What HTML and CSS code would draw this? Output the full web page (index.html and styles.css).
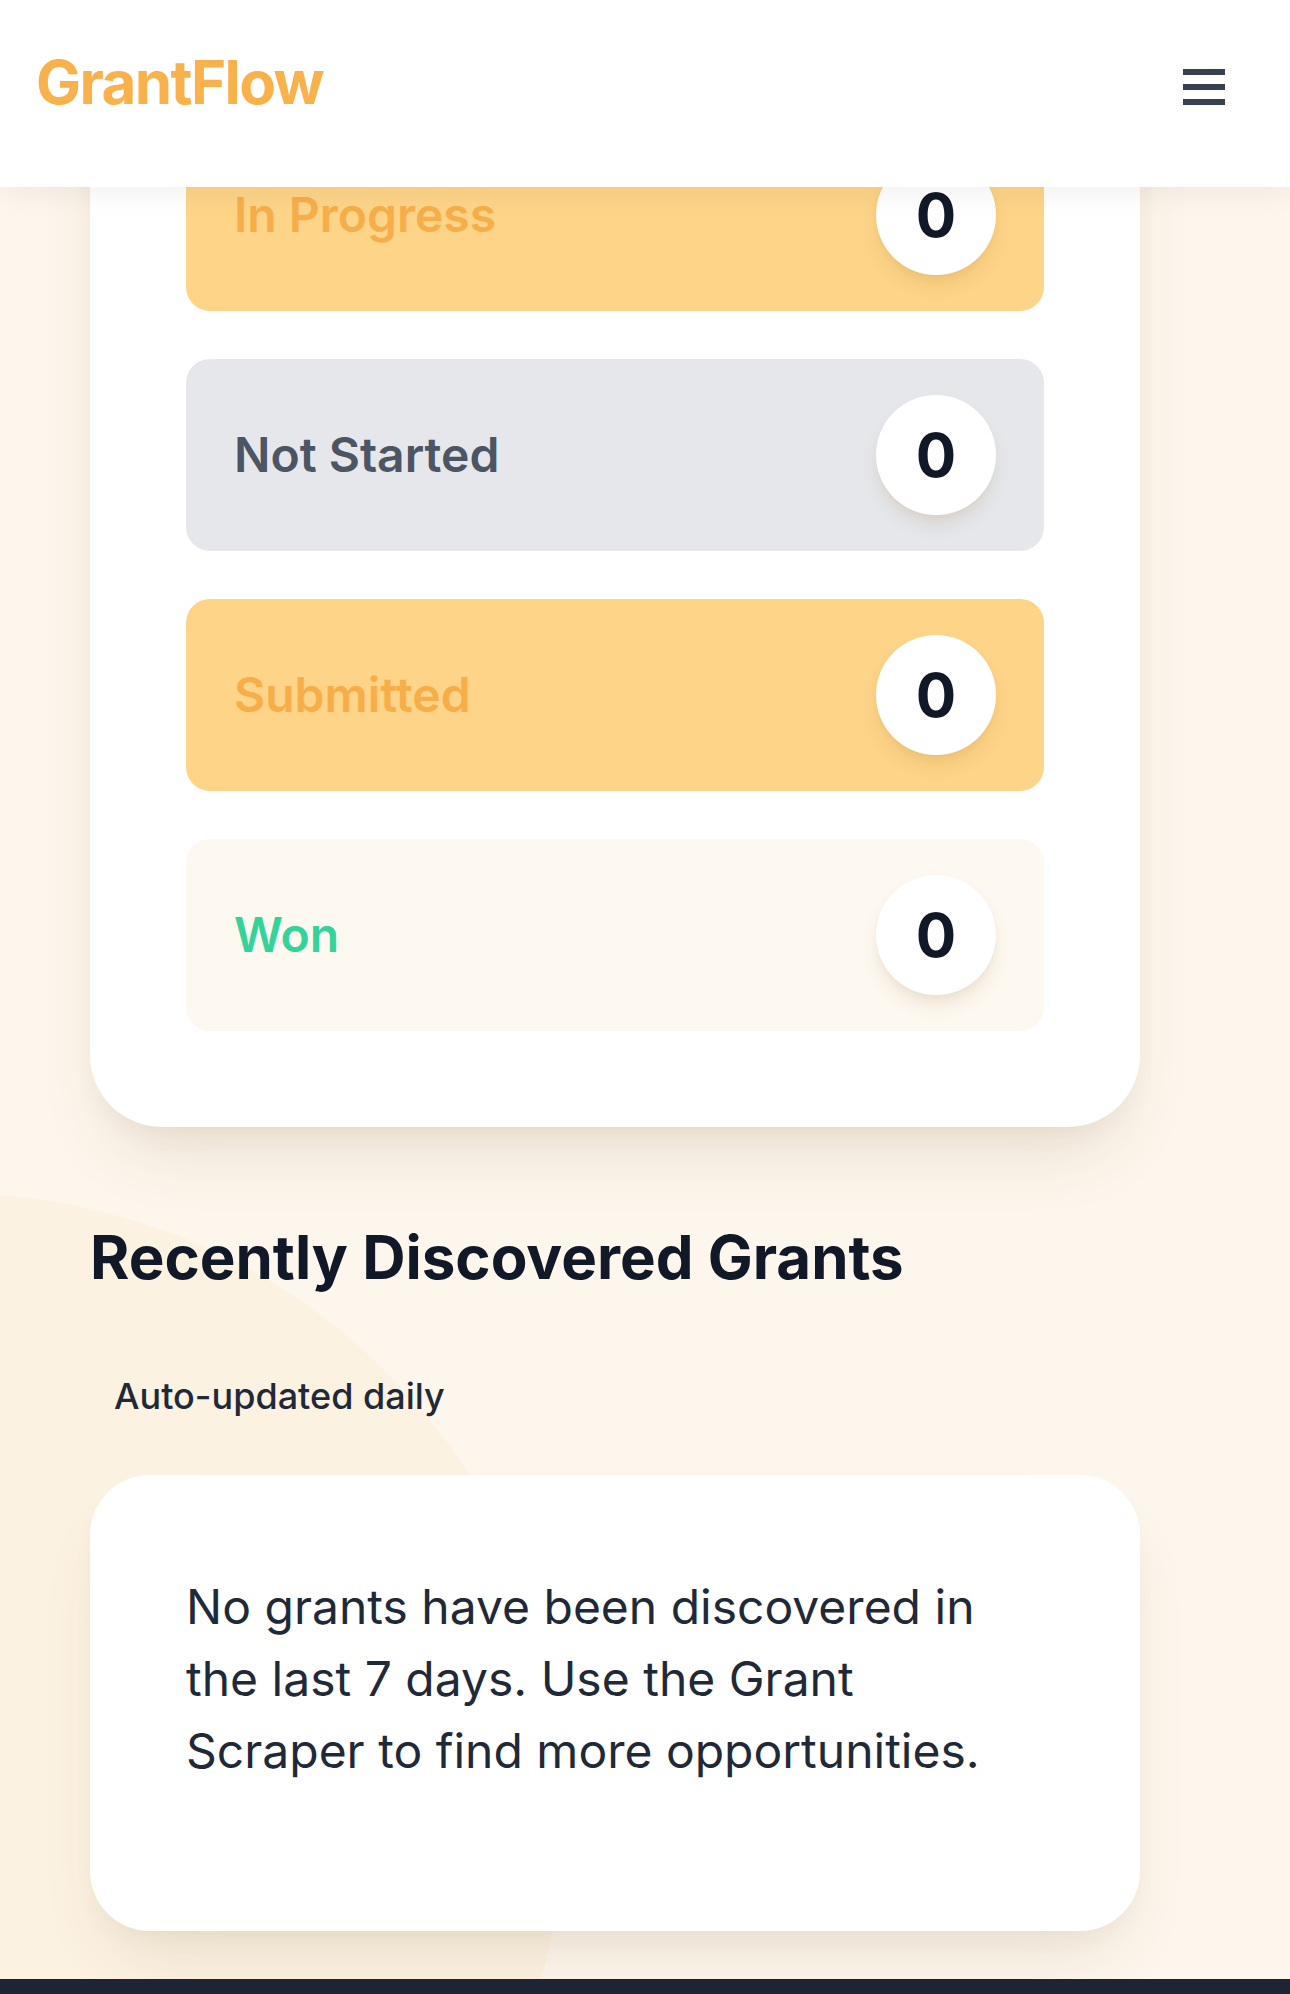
FILE: index.html
```html
<!DOCTYPE html>
<html lang="en">
<head>
<meta charset="utf-8">
<title>GrantFlow</title>
<link rel="stylesheet" href="styles.css">
</head>
<body>
<header class="topbar">
  <div class="logo">GrantFlow</div>
  <button class="menu-btn" aria-label="Menu">
    <svg width="42" height="36" viewBox="0 0 42 36" aria-hidden="true">
      <rect x="0" y="0" width="42" height="6" fill="#374151"/>
      <rect x="0" y="15" width="42" height="6" fill="#374151"/>
      <rect x="0" y="30" width="42" height="6" fill="#374151"/>
    </svg>
  </button>
</header>

<main class="page">
  <section class="status-card">
    <div class="status-list">
      <div class="status-row row-progress">
        <span class="status-label">In Progress</span>
        <span class="count">0</span>
      </div>
      <div class="status-row row-notstarted">
        <span class="status-label">Not Started</span>
        <span class="count">0</span>
      </div>
      <div class="status-row row-submitted">
        <span class="status-label">Submitted</span>
        <span class="count">0</span>
      </div>
      <div class="status-row row-won">
        <span class="status-label">Won</span>
        <span class="count">0</span>
      </div>
    </div>
  </section>

  <section class="recent">
    <h2 class="recent-title">Recently Discovered Grants</h2>
    <span class="badge">Auto-updated daily</span>
    <div class="empty-card">
      <p class="empty-text">No grants have been discovered in the last 7 days. Use the Grant Scraper to find more opportunities.</p>
    </div>
  </section>
</main>

<footer class="footer"></footer>
</body>
</html>
```

FILE: styles.css
```css
* {
  box-sizing: border-box;
}

html,
body {
  margin: 0;
  padding: 0;
}

body {
  font-family: Inter, "Noto Sans", "Liberation Sans", sans-serif;
  color: #111827;
  background:
    radial-gradient(circle 612px at -45px 1805px, #fcf2e2 calc(100% - 1.5px), rgba(252, 242, 226, 0) 100%),
    #fdf6ec;
  overflow: hidden;
}

.topbar {
  position: fixed;
  top: 0;
  left: 0;
  right: 0;
  height: 187px;
  z-index: 10;
  display: flex;
  justify-content: space-between;
  align-items: flex-start;
  padding: 40px 53px 0 36px;
  background: #ffffff;
  box-shadow: 0 6px 28px rgba(0, 0, 0, 0.06);
}

.logo {
  font-size: 60px;
  line-height: 84px;
  font-weight: 700;
  letter-spacing: -1.6px;
  color: #f9b14b;
}

.menu-btn {
  margin-top: 17px;
  padding: 12px;
  border: 0;
  background: transparent;
  display: flex;
}

.menu-btn svg {
  display: block;
}

/* Main content */
.page {
  width: 1050px;
  margin-left: 90px;
  padding-top: 23px;
}

.status-card {
  background: #ffffff;
  border-radius: 72px;
  padding: 96px;
  box-shadow:
    0 40px 70px -20px rgba(90, 60, 20, 0.13),
    0 12px 30px -12px rgba(90, 60, 20, 0.08);
}

.status-list {
  display: flex;
  flex-direction: column;
  gap: 48px;
}

.status-row {
  display: flex;
  justify-content: space-between;
  align-items: center;
  padding: 36px 48px;
  border-radius: 24px;
}

.status-label {
  font-size: 48px;
  line-height: 72px;
  font-weight: 600;
}

.row-progress,
.row-submitted {
  background: #fdd488;
}

.row-progress .status-label,
.row-submitted .status-label {
  color: #f8ae48;
}

.row-notstarted {
  background: #e5e7eb;
}

.row-notstarted .status-label {
  color: #4b5563;
}

.row-won {
  background: #fdf8f0;
}

.row-won .status-label {
  color: #34d399;
}

.count {
  width: 120px;
  height: 120px;
  border-radius: 50%;
  background: #ffffff;
  display: flex;
  align-items: center;
  justify-content: center;
  font-size: 60px;
  font-weight: 700;
  color: #111827;
  box-shadow:
    0 12px 20px -4px rgba(150, 100, 30, 0.14),
    0 4px 10px -4px rgba(150, 100, 30, 0.1);
}

/* Recently discovered */
.recent {
  margin-top: 88px;
}

.recent-title {
  margin: 0 0 61px;
  font-size: 60px;
  line-height: 84px;
  font-weight: 700;
  color: #111827;
}

.badge {
  display: inline-block;
  padding: 12px 24px;
  font-size: 36px;
  line-height: 48px;
  font-weight: 500;
  color: #1f2937;
}

.empty-card {
  margin-top: 43px;
  background: #ffffff;
  border-radius: 60px;
  padding: 96px 96px 144px;
  box-shadow:
    0 40px 70px -20px rgba(90, 60, 20, 0.11),
    0 12px 30px -12px rgba(90, 60, 20, 0.07);
}

.empty-text {
  margin: 0;
  font-size: 48px;
  line-height: 72px;
  font-weight: 400;
  color: #1f2937;
}

.footer {
  margin-top: 48px;
  height: 16px;
  background: #1e2434;
}
```
